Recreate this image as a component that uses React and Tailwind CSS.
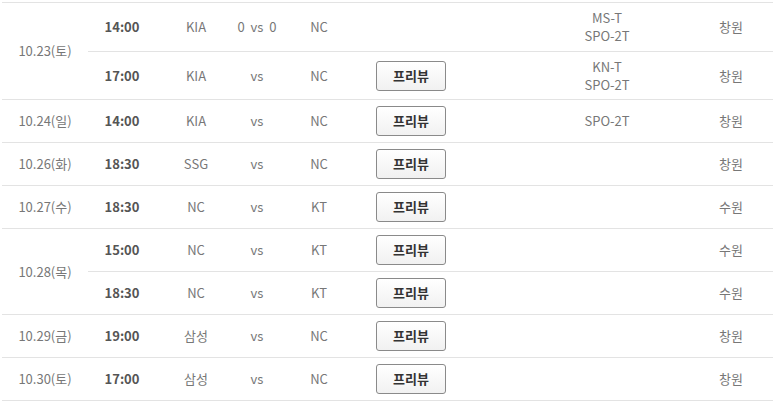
import React from "react";

const font = { fontFamily: '"Noto Sans CJK KR", "Noto Sans", sans-serif' };

function Game({ g, h, border }) {
  return (
    <div className={`flex items-center ${h} ${border ? "border-b border-[#e3e3e3]" : ""}`}>
      <div className="w-[68px] text-center font-semibold text-[#555]">{g.time}</div>
      <div className="w-[80px] text-center text-[#777]">{g.t1}</div>
      <div className="w-[42px] text-center text-[#777] whitespace-pre">{g.vs || "vs"}</div>
      <div className="w-[82px] text-center text-[#777]">{g.t2}</div>
      <div className="w-[102px] flex justify-center">
        {g.btn && (
          <button className="w-[70px] h-[30px] border border-[#8a8a8a] rounded-[3px] bg-gradient-to-b from-white to-[#f1f1f1] font-bold text-[#333] text-[13px]">
            프리뷰
          </button>
        )}
      </div>
      <div className="ml-[79px] w-[132px] text-center text-[#777] leading-[18px]">
        {g.tv.map((t, i) => (
          <div key={i}>{t}</div>
        ))}
      </div>
      <div className="ml-[16px] w-[84px] text-center text-[#777]">{g.st}</div>
    </div>
  );
}

const days = [
  {
    date: "10.23(토)",
    tall: true,
    games: [
      { time: "14:00", t1: "KIA", vs: "0  vs  0", t2: "NC", btn: false, tv: ["MS-T", "SPO-2T"], st: "창원" },
      { time: "17:00", t1: "KIA", t2: "NC", btn: true, tv: ["KN-T", "SPO-2T"], st: "창원" },
    ],
  },
  { date: "10.24(일)", games: [{ time: "14:00", t1: "KIA", t2: "NC", btn: true, tv: ["SPO-2T"], st: "창원" }] },
  { date: "10.26(화)", games: [{ time: "18:30", t1: "SSG", t2: "NC", btn: true, tv: [], st: "창원" }] },
  { date: "10.27(수)", games: [{ time: "18:30", t1: "NC", t2: "KT", btn: true, tv: [], st: "수원" }] },
  {
    date: "10.28(목)",
    games: [
      { time: "15:00", t1: "NC", t2: "KT", btn: true, tv: [], st: "수원" },
      { time: "18:30", t1: "NC", t2: "KT", btn: true, tv: [], st: "수원" },
    ],
  },
  { date: "10.29(금)", games: [{ time: "19:00", t1: "삼성", t2: "NC", btn: true, tv: [], st: "창원" }] },
  { date: "10.30(토)", games: [{ time: "17:00", t1: "삼성", t2: "NC", btn: true, tv: [], st: "창원" }] },
];

export default function App() {
  return (
    <div className="w-[773px] h-[405px] bg-white pt-[2px] text-[13px]" style={font}>
      <div className="ml-[2px] border-t border-[#e3e3e3]">
        {days.map((d) => (
          <div key={d.date} className="flex border-b border-[#e3e3e3]">
            <div className="w-[86px] flex items-center justify-center text-[#777]">{d.date}</div>
            <div className="flex-1">
              {d.games.map((g, i) => (
                <Game
                  key={i}
                  g={g}
                  border={i < d.games.length - 1}
                  h={d.tall ? (i === 0 ? "h-[49px]" : "h-[47px]") : i < d.games.length - 1 ? "h-[43px]" : "h-[42px]"}
                />
              ))}
            </div>
          </div>
        ))}
      </div>
    </div>
  );
}
